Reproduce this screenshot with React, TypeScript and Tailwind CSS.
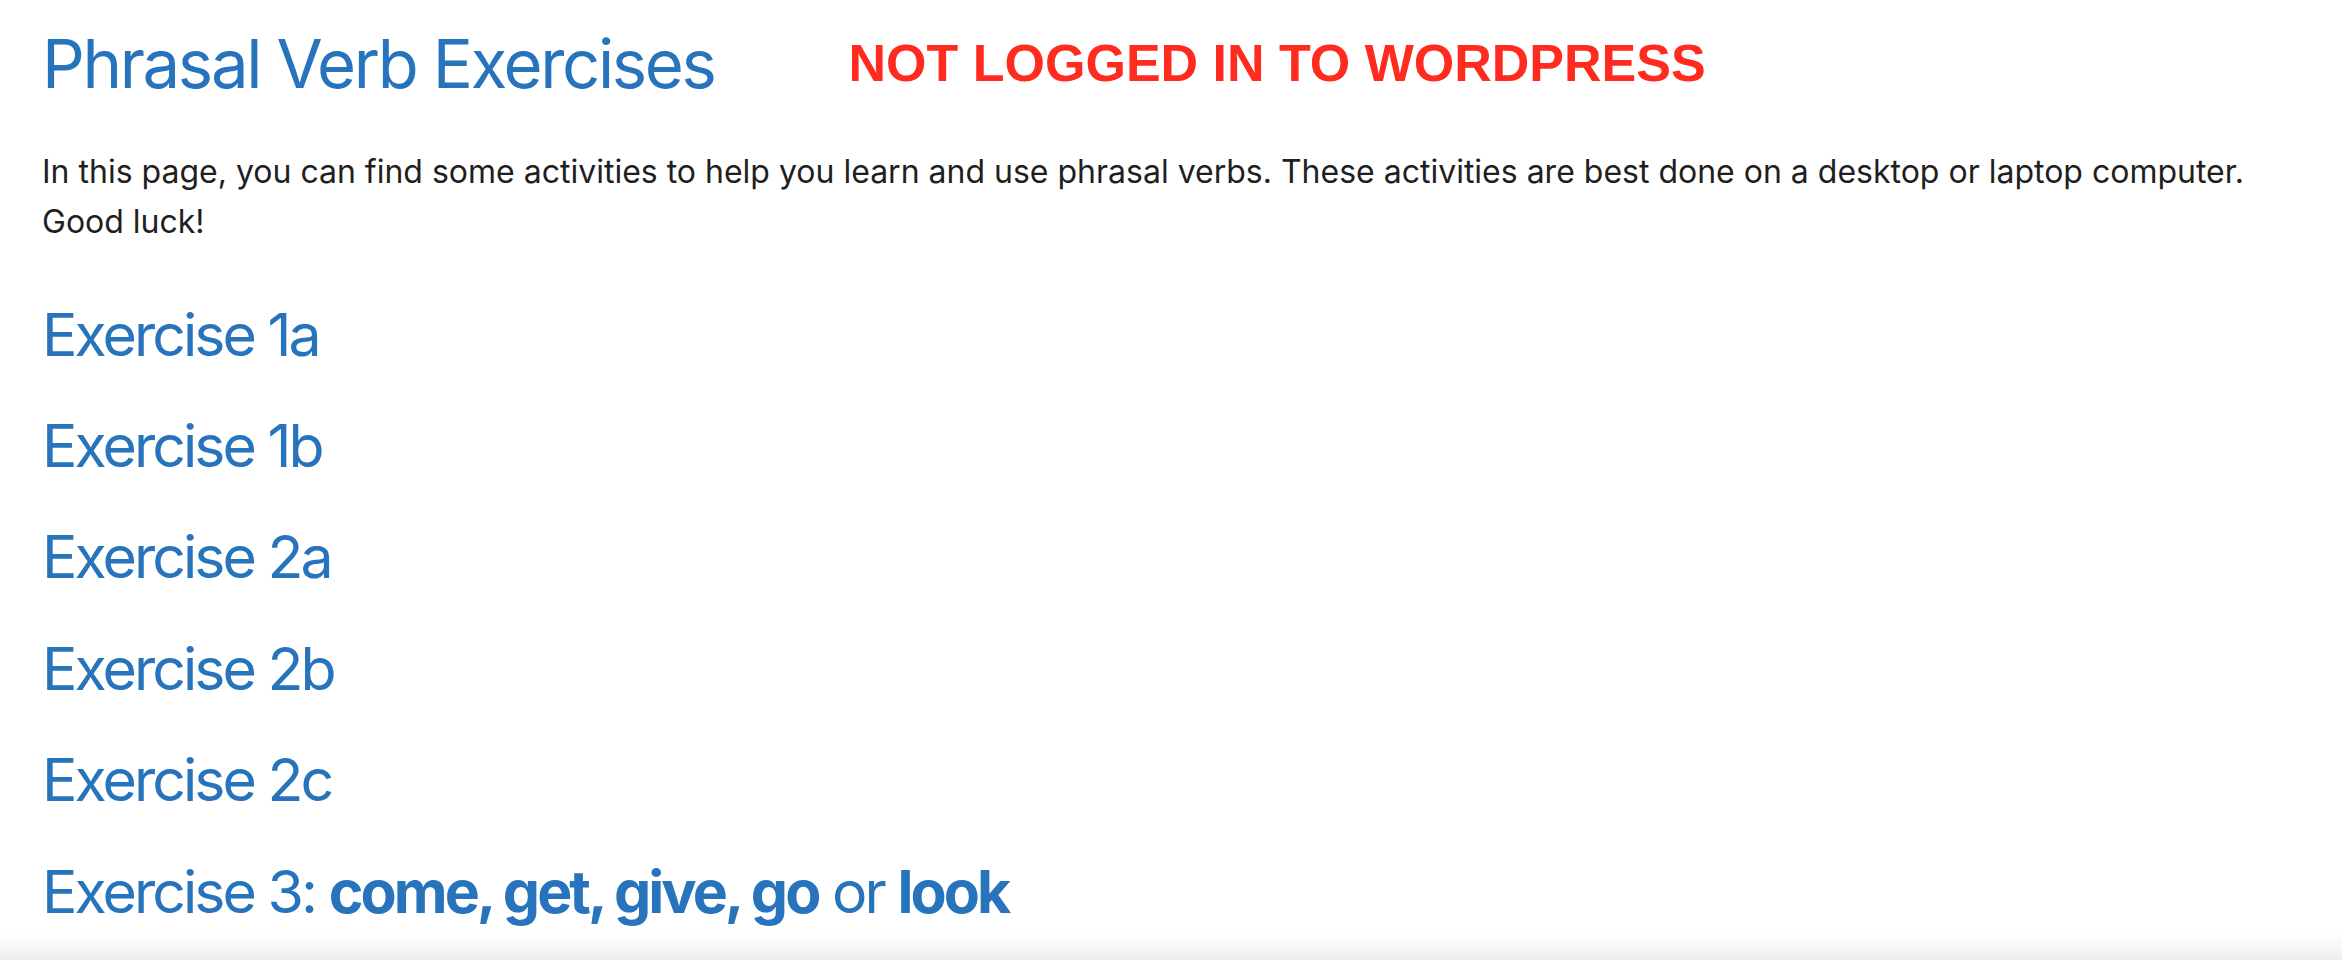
import React from "react";

const exercises = ["Exercise 1a", "Exercise 1b", "Exercise 2a", "Exercise 2b", "Exercise 2c"];

export default function App() {
  return (
    <div className="flex h-[968px] flex-col bg-white font-['Inter',sans-serif]">
      <main className="pl-[42px] pr-8">
        <header className="flex items-start pt-[24px]">
          <h1 className="text-[67px] leading-[80px] font-normal tracking-[-0.035em] text-[#2774bd]">
            Phrasal Verb Exercises
          </h1>
          <div className="ml-[134px] pt-[9px] font-['Liberation_Sans',Arial,sans-serif] text-[52px] leading-[60px] font-bold text-[#ff2b1f]">
            NOT LOGGED IN TO WORDPRESS
          </div>
        </header>

        <p className="mt-[42.6px] text-[32px] leading-[50px] text-[#1f1f1f]">
          In this page, you can find some activities to help you learn and use phrasal verbs. These activities are
          best done on a desktop or laptop computer. Good luck!
        </p>

        <ul className="mt-[52px] flex flex-col gap-[39.4px]">
          {exercises.map((name) => (
            <li key={name}>
              <a href="#" className="text-[59px] leading-[72px] tracking-[-0.05em] text-[#2774bd]">
                {name}
              </a>
            </li>
          ))}
          <li>
            <a href="#" className="text-[59px] leading-[72px] tracking-[-0.05em] text-[#2774bd]">
              Exercise 3: <strong className="font-bold">come, get, give, go</strong> or{" "}
              <strong className="font-bold">look</strong>
            </a>
          </li>
        </ul>
      </main>

      <div className="mt-auto h-[27px] bg-gradient-to-b from-white to-[#eeeeee]" />
      <div className="h-[8px] bg-white" />
    </div>
  );
}
